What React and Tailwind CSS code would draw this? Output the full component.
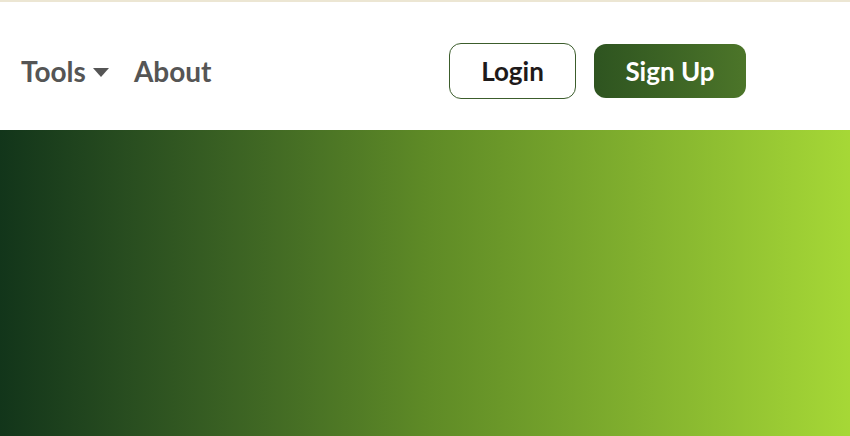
export default function App() {
    return (
        <div className="min-h-screen bg-white font-['Lato',sans-serif]">
            <header className="h-[130px] border-t-2 border-[#ece6d3] bg-white flex items-center pt-[10px]">
                <nav className="flex items-center pl-[21px] gap-[25px] text-[28px] font-bold text-[#555555]">
                    <button className="flex items-center gap-[7px]">
                        <span>Tools</span>
                        <svg width="16" height="9" viewBox="0 0 16 9" className="mt-[2px]">
                            <path d="M0 0 H16 L8 9 Z" fill="#555555" />
                        </svg>
                    </button>
                    <a href="#">About</a>
                </nav>
                <div className="flex items-center gap-[18px] ml-auto mr-[104px]">
                    <button className="w-[127px] h-[56px] rounded-[12px] border border-[#3c5d2c] bg-white text-[26px] font-bold text-[#1e1a1a]">
                        Login
                    </button>
                    <button className="w-[152px] h-[54px] rounded-[12px] bg-gradient-to-r from-[#2e5420] to-[#4c7529] text-[26px] font-bold text-white">
                        Sign Up
                    </button>
                </div>
            </header>
            <section className="h-[306px] bg-gradient-to-r from-[#12351a] via-[#5e8a26] to-[#a6d836]" />
        </div>
    );
}
